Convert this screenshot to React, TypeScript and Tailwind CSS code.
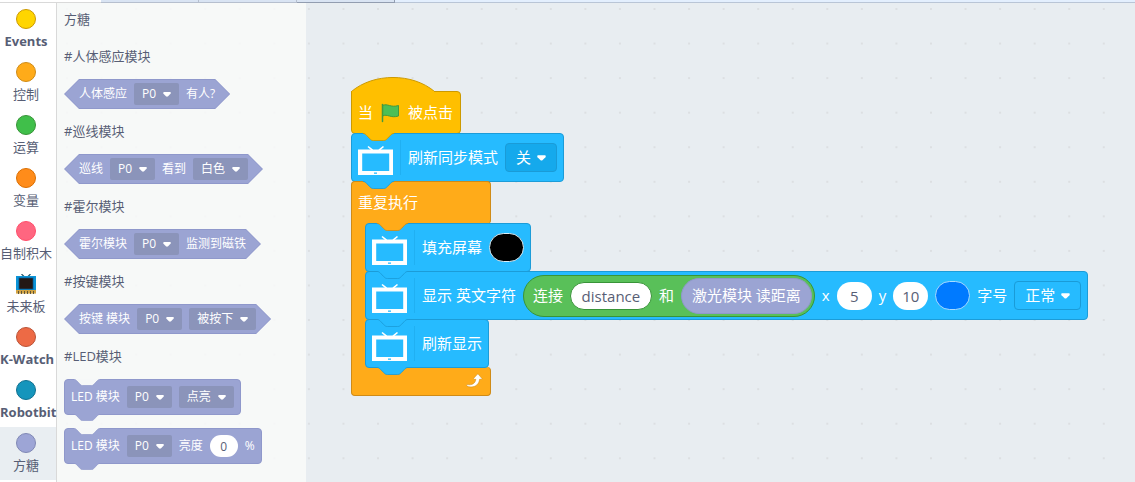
import type { ReactNode } from "react";

const categories = [
  { name: "Events", dot: "border-[#cc9900] bg-[#ffd500]" },
  { name: "控制", dot: "border-[#cf8b17] bg-[#ffab19]" },
  { name: "运算", dot: "border-[#389438] bg-[#40bf4a]" },
  { name: "变量", dot: "border-[#db6e00] bg-[#ff8c1a]" },
  { name: "自制积木", dot: "border-[#ff4d6a] bg-[#ff6680]" },
  { name: "未来板", dot: "" },
  { name: "K-Watch", dot: "border-[#ba5337] bg-[#ed6a45]" },
  { name: "Robotbit", dot: "border-[#107090] bg-[#1595bc]" },
  { name: "方糖", dot: "border-[#8088b5] bg-[#9da5d6]", active: true },
];

const notchLine =
  "M0 .5c2 0 3 1 4 2l4 4c1 1 2 2 4 2h12c2 0 3-1 4-2l4-4c1-1 2-2 4-2";

type NotchProps = { className: string };

// Connector shape: hangs below a block, or cuts into the top of one.
function Notch({ className }: NotchProps) {
  return (
    <svg
      aria-hidden="true"
      className={`pointer-events-none absolute z-10 ${className}`}
      preserveAspectRatio="none"
      viewBox="0 0 36 9"
    >
      <path d={`${notchLine}V0H0z`} stroke="none" />
      <path d={notchLine} fill="none" />
    </svg>
  );
}

function Arrow() {
  return (
    <svg aria-hidden="true" className="h-full w-full" viewBox="0 0 10 6">
      <path
        d="M1.500 0h7c1.300 0 1.600 1.300.9 2.100L6.300 5.300c-.8.800-1.800.8-2.600 0L.6 2.100C-.1 1.300.2 0 1.500 0z"
        fill="#fff"
      />
    </svg>
  );
}

type DropdownProps = { label: string; value: string; className?: string };

function PaletteSelect({ label, value }: DropdownProps) {
  return (
    <span className="relative flex">
      <select
        aria-label={label}
        className="h-[22px] appearance-none rounded-xs bg-[#8b94ba] pr-[22px] pl-2 text-xs text-white"
      >
        <option>{value}</option>
      </select>
      <span className="pointer-events-none absolute top-[9px] right-2 h-[5px] w-2">
        <Arrow />
      </span>
    </span>
  );
}

function BlockSelect({ label, value, className = "" }: DropdownProps) {
  return (
    <span className="relative flex">
      <select
        aria-label={label}
        className={`h-[29px] appearance-none rounded border border-[#1a9bd7] pr-6 pl-[10px] text-[15px] text-white ${className}`}
      >
        <option>{value}</option>
      </select>
      <span className="pointer-events-none absolute top-3 right-[11px] h-[6px] w-[9px]">
        <Arrow />
      </span>
    </span>
  );
}

function Hexagon({ children }: { children: ReactNode }) {
  return (
    <div className="h-[30px] w-fit bg-[#8f98cb] p-px [clip-path:polygon(15px_0,calc(100%_-_15px)_0,100%_50%,calc(100%_-_15px)_100%,15px_100%,0_50%)]">
      <div className="flex h-7 items-center gap-[7px] bg-[#9ba4d3] px-[14px] [clip-path:polygon(14px_0,calc(100%_-_14px)_0,100%_50%,calc(100%_-_14px)_100%,14px_100%,0_50%)]">
        {children}
      </div>
    </div>
  );
}

function PaletteStack({ children }: { children: ReactNode }) {
  return (
    <div className="relative flex h-9 w-fit items-center gap-[7px] rounded border border-[#8f98cb] bg-[#9ba4d3] px-[6px]">
      <Notch className="-top-px left-[9px] h-[7px] w-[26px] fill-[#f6f8f8] stroke-[#8f98cb]" />
      {children}
      <Notch className="-bottom-[7px] left-[9px] h-[7px] w-[26px] fill-[#9ba4d3] stroke-[#8f98cb]" />
    </div>
  );
}

function PaletteTitle({ children }: { children: ReactNode }) {
  return <h2 className="text-[13px] leading-5 text-[#575e75]">{children}</h2>;
}

function BoardIcon() {
  return (
    <svg aria-hidden="true" className="size-5 shrink-0" viewBox="0 0 20 20">
      <path d="M5.5 0 8 2.5M14.5 0 12 2.5" stroke="#275668" strokeWidth="1.2" />
      <path d="M0 2h20v15H0z" fill="#0b94d8" />
      <path d="M0 16h20v3.6H0z" fill="#d3a443" />
      <path
        d="M2.5 17v3M5.5 17v3M8.5 17v3M11.5 17v3M14.5 17v3M17.5 17v3"
        stroke="#5f5638"
      />
      <path d="M2.5 3.5h15v12h-15z" fill="#0a5d96" />
      <path d="M3.3 4.3h13.4v10.4H3.3z" fill="#231815" />
    </svg>
  );
}

function ScreenIcon() {
  return (
    <svg aria-hidden="true" className="size-[35px] shrink-0" viewBox="0 0 35 35">
      <path d="m10 6.500 4.500 3.700M25.500 6.500 21 10.200" stroke="#fff" strokeWidth="1.6" />
      <path d="M0 9.500h35V35H0zM4.200 13.500v17.500h27V13.500z" fill="#fff" fillRule="evenodd" />
      <path d="M16 32.500h3v1.300h-3z" fill="#26bbff" />
    </svg>
  );
}

function ScreenBlock({ children }: { children: ReactNode }) {
  return (
    <div className="relative -mt-px flex h-[49px] w-fit items-center gap-[7px] rounded border border-[#1c9cd8] bg-[#26bbff] px-[6px] whitespace-nowrap">
      <ScreenIcon />
      <span className="h-[35px] w-px bg-[#20b0f2]" />
      {children}
      <Notch className="-bottom-2 left-[11px] h-[8px] w-[31px] fill-[#26bbff] stroke-[#1c9cd8]" />
    </div>
  );
}

type FieldProps = { label: string; value: string; className: string };

function Field({ label, value, className }: FieldProps) {
  return (
    <input
      aria-label={label}
      className={`rounded-full bg-white text-center text-[#575e75] ${className}`}
      defaultValue={value}
      type="text"
    />
  );
}

function Palette() {
  return (
    <section className="relative w-[249px] shrink-0 bg-[#f9faf9]/85 pt-[6px] pl-[7px] text-xs text-white">
      <PaletteTitle>方糖</PaletteTitle>
      <div className="mt-[17px] flex flex-col gap-3">
        <div className="flex flex-col gap-[13px]">
          <PaletteTitle>#人体感应模块</PaletteTitle>
          <Hexagon>
            <span>人体感应</span>
            <PaletteSelect label="人体感应" value="P0" />
            <span>有人?</span>
          </Hexagon>
        </div>
        <div className="flex flex-col gap-[13px]">
          <PaletteTitle>#巡线模块</PaletteTitle>
          <Hexagon>
            <span>巡线</span>
            <PaletteSelect label="巡线" value="P0" />
            <span>看到</span>
            <PaletteSelect label="看到" value="白色" />
          </Hexagon>
        </div>
        <div className="flex flex-col gap-[13px]">
          <PaletteTitle>#霍尔模块</PaletteTitle>
          <Hexagon>
            <span>霍尔模块</span>
            <PaletteSelect label="霍尔模块" value="P0" />
            <span>监测到磁铁</span>
          </Hexagon>
        </div>
        <div className="flex flex-col gap-[13px]">
          <PaletteTitle>#按键模块</PaletteTitle>
          <Hexagon>
            <span>按键 模块</span>
            <PaletteSelect label="按键 模块" value="P0" />
            <PaletteSelect label="按键" value="被按下" />
          </Hexagon>
        </div>
        <div className="flex flex-col gap-[13px]">
          <PaletteTitle>#LED模块</PaletteTitle>
          <PaletteStack>
            <span>LED 模块</span>
            <PaletteSelect label="LED 模块" value="P0" />
            <PaletteSelect label="LED" value="点亮" />
          </PaletteStack>
          <PaletteStack>
            <span>LED 模块</span>
            <PaletteSelect label="LED 模块" value="P0" />
            <span>亮度</span>
            <Field className="h-[22px] w-7" label="亮度" value="0" />
            <span>%</span>
          </PaletteStack>
        </div>
      </div>
    </section>
  );
}

function Script() {
  return (
    <div className="w-fit text-[15px] text-white">
      <svg
        aria-hidden="true"
        className="relative -mb-px block h-[15px] w-[84px]"
        viewBox="0 0 84 15"
      >
        <path
          d="M.5 19v-4.500c22-18.700 61-18.700 83 0V19z"
          fill="#ffbf00"
          stroke="#cc9900"
        />
      </svg>
      <div className="relative flex h-[43px] w-fit items-center gap-2 rounded-r rounded-bl border border-[#cc9900] bg-[#ffbf00] pr-[7px] pl-[6px] whitespace-nowrap">
        <span className="absolute -top-px left-0 h-px w-[82px] bg-[#ffbf00]" />
        <span>当</span>
        <svg aria-hidden="true" className="h-5 w-[19px]" viewBox="0 0 19 20">
          <path
            d="M1.500 2.500c5-2.500 8 2.500 16 0v10.500c-8 2.500-11-2.500-16 0z"
            fill="#4cbf56"
            stroke="#45993d"
          />
          <path
            d="M1.500 1.500v17"
            stroke="#45993d"
            strokeLinecap="round"
            strokeWidth="1.500"
          />
        </svg>
        <span>被点击</span>
        <Notch className="-bottom-2 left-[11px] h-[8px] w-[31px] fill-[#ffbf00] stroke-[#cc9900]" />
      </div>

      <ScreenBlock>
        <span>刷新同步模式</span>
        <BlockSelect className="bg-[#15a9ec]" label="刷新同步模式" value="关" />
      </ScreenBlock>

      <div className="-mt-px">
        <div className="relative flex h-[43px] w-[140px] items-center rounded-t rounded-br border border-b-0 border-[#cf8b17] bg-[#ffab19] px-[6px] pb-[2px]">
          重复执行
          <Notch className="-bottom-[7px] left-[25px] h-[8px] w-[31px] fill-[#ffab19] stroke-[#cf8b17]" />
        </div>
        <div className="flex">
          <div className="w-[18px] border-l border-[#cf8b17] bg-[#ffab19]" />
          <div className="relative -ml-1">
            <ScreenBlock>
              <span>填充屏幕</span>
              <button
                aria-label="填充屏幕"
                className="h-[29px] w-[35px] rounded-full border border-[#d9eef8] bg-black"
                type="button"
              />
            </ScreenBlock>
            <ScreenBlock>
              <span>显示 英文字符</span>
              <div className="flex h-[42px] items-center gap-[7px] rounded-full border border-[#389438] bg-[#59c059] pr-[2px] pl-[9px]">
                <span>连接</span>
                <Field
                  className="h-[28px] w-[82px] border border-[#389438]"
                  label="连接"
                  value="distance"
                />
                <span>和</span>
                <span className="flex h-9 items-center rounded-full border border-[#8f98cb] bg-[#9ba4d3] px-[10px]">
                  激光模块 读距离
                </span>
              </div>
              <span>x</span>
              <Field className="h-[28px] w-[35px]" label="x" value="5" />
              <span>y</span>
              <Field className="h-[28px] w-[35px]" label="y" value="10" />
              <button
                aria-label="颜色"
                className="h-[29px] w-[35px] rounded-full border border-[#a8dcff] bg-[#007aff]"
                type="button"
              />
              <span>字号</span>
              <BlockSelect className="bg-[#26bbff]" label="字号" value="正常" />
            </ScreenBlock>
            <ScreenBlock>
              <span>刷新显示</span>
            </ScreenBlock>
          </div>
        </div>
        <div className="-mt-px flex h-[29px] w-[140px] items-center justify-end rounded-b rounded-tr border border-t-0 border-[#cf8b17] bg-[#ffab19] pr-[7px]">
          <svg aria-hidden="true" className="h-4 w-[17px]" viewBox="0 0 17 16">
            <path
              d="M11.300 1.300c.4-.4.700-.4 1.100 0l3.400 4c.4.5.2 1-.5 1h-1.700c-.5 4.800-4 7.700-8.600 7.700-1.700 0-3-.3-4-.9-.8-.6-.4-1.700.6-1.500 4.500.7 7.700-1.200 8.200-5.300H8.200c-.7 0-.9-.5-.5-1z"
              fill="#fff"
              stroke="#cf8b17"
              strokeWidth=".6"
            />
          </svg>
        </div>
      </div>
    </div>
  );
}

export default function App() {
  return (
    <div className="flex min-h-screen flex-col overflow-hidden bg-white font-['Open_Sans','Noto_Sans_CJK_SC',sans-serif]">
      <header className="flex h-[3px]">
        <div className="w-[101px] border-b border-[#d9d9d9] bg-white" />
        <div className="w-[98px] border-r border-b border-[#b6bfce] bg-[#d9e4f3]" />
        <div className="w-[98px] border-r border-b border-[#b6bfce] bg-[#d9e4f3]" />
        <div className="w-[98px] border-r border-b border-[#929db0] bg-[#d9e4f3]" />
        <div className="flex-1 border-b border-[#b9c5d6] bg-[#e3effe]" />
      </header>

      <div className="flex flex-1">
        <nav className="w-[57px] shrink-0 border-r border-[#d9d9d9] bg-white">
          {categories.map((category) => (
            <button
              className={`flex h-[53px] w-full flex-col items-center-safe pt-[6px] pr-1 text-[13px] leading-6 whitespace-nowrap text-[#575e75] ${category.active ? "bg-[#e9eef2]" : ""}`}
              key={category.name}
              type="button"
            >
              {category.dot ? (
                <span
                  className={`size-5 shrink-0 rounded-full border ${category.dot}`}
                />
              ) : (
                <BoardIcon />
              )}
              <span
                className={/[A-Z]/.test(category.name) ? "font-bold" : ""}
              >
                {category.name}
              </span>
            </button>
          ))}
        </nav>

        <main className="relative flex min-w-0 flex-1 bg-[#e8edf1]">
          <svg aria-hidden="true" className="absolute size-full">
            <pattern
              height="34.560"
              id="dots"
              patternUnits="userSpaceOnUse"
              width="34.560"
              x="8"
              y="5"
            >
              <path d="M1 0h2v2H1z" fill="#dcdfe2" />
            </pattern>
            <rect fill="url(#dots)" height="100%" width="100%" />
          </svg>
          <Palette />
          <div className="relative min-w-0 flex-1 pt-[74px] pl-[45px]">
            <Script />
          </div>
        </main>
      </div>
    </div>
  );
}
